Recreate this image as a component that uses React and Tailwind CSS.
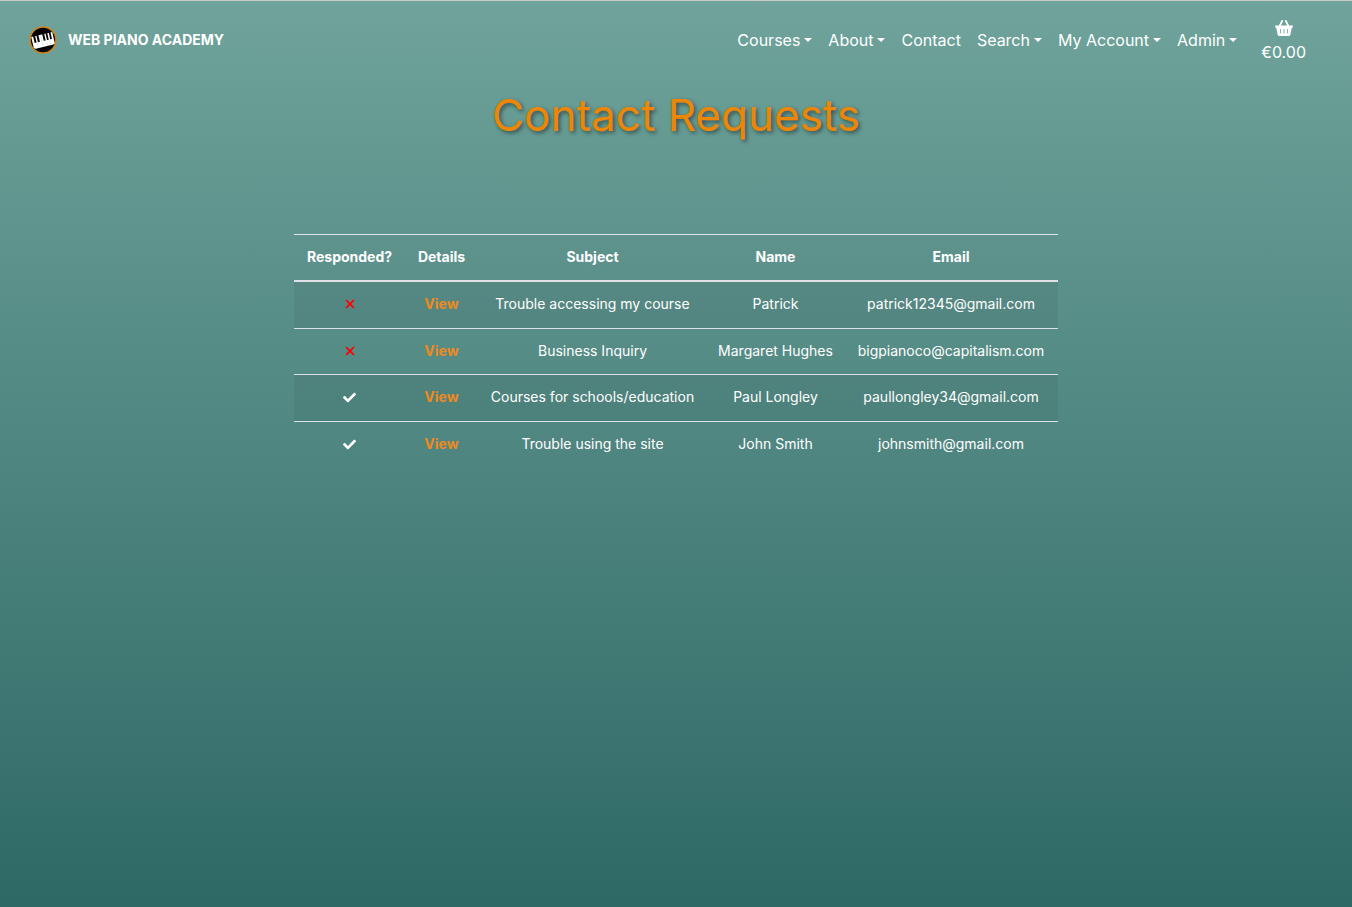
import { FaCheck } from "react-icons/fa";
import { FaXmark } from "react-icons/fa6";

const navItems = [
  { label: "Courses", menu: true },
  { label: "About", menu: true },
  { label: "Contact", menu: false },
  { label: "Search", menu: true },
  { label: "My Account", menu: true },
  { label: "Admin", menu: true },
];

const requests = [
  { responded: false, subject: "Trouble accessing my course", name: "Patrick", email: "patrick12345@gmail.com" },
  { responded: false, subject: "Business Inquiry", name: "Margaret Hughes", email: "bigpianoco@capitalism.com" },
  { responded: true, subject: "Courses for schools/education", name: "Paul Longley", email: "paullongley34@gmail.com" },
  { responded: true, subject: "Trouble using the site", name: "John Smith", email: "johnsmith@gmail.com" },
];

function Logo() {
  return (
    <svg viewBox="0 0 28 28" className="size-7" aria-hidden="true">
      <circle cx="14" cy="14" r="13" fill="#050505" stroke="#d0851a" strokeWidth="1.6" />
      <g transform="rotate(-13 14 14)">
        <path d="M3.200 8.300H24.800V19Q24.800 20.800 23 20.800H5Q3.400 20.800 3.200 19Z" fill="#fff" />
        <path d="M5.200 7.500h2v7.500h-2zM8.600 7.500h2v7.500h-2zM14.500 7.500h2v7.500h-2zM17.900 7.500h1.800v7.500h-1.800zM21.200 7.500h1.800v7.500h-1.800z" fill="#050505" />
        <path d="M7.800 15v6M12.500 9v12M17.200 15v6M20.500 15v6" stroke="#bbb" strokeWidth=".3" />
      </g>
    </svg>
  );
}

function Basket() {
  return (
    <svg viewBox="0 0 18 16" className="my-1 h-4 w-[18px]" aria-hidden="true">
      <path d="M7.200 .9 4.400 6.500M10.800 .9l2.800 5.600" stroke="currentColor" strokeWidth="1.800" strokeLinecap="round" />
      <path
        fillRule="evenodd"
        fill="currentColor"
        d="M.9 5.600h16.200q.9 0 .9 1t-.9 1h-.2l-1.500 6.900q-.3 1.500-1.700 1.500H4.300q-1.400 0-1.700-1.500L1.100 7.600H.9q-.9 0-.9-1t.9-1ZM5.100 9.300v3.800q0 .4.400.4t.4-.4V9.300q0-.4-.4-.4t-.4.4Zm3.500 0v3.800q0 .4.400.4t.4-.4V9.300q0-.4-.4-.4t-.4.4Zm3.500 0v3.800q0 .4.400.4t.4-.4V9.300q0-.4-.4-.4t-.4.4Z"
      />
    </svg>
  );
}

function Caret() {
  return <span className="ml-1 border-x-4 border-t-4 border-x-transparent border-t-current" />;
}

export default function App() {
  return (
    <div className="min-h-screen border-t border-[#cbcbcb] bg-linear-to-b from-[#6fa39b] to-[#2e6966] font-['Inter',sans-serif] text-white">
      <header className="flex h-[78px] items-center justify-between pr-[46px] pl-[29px]">
        <a href="#" className="flex items-center gap-[11px] text-sm font-bold">
          <Logo />
          WEB PIANO ACADEMY
        </a>
        <nav className="flex items-center gap-6">
          <ul className="flex items-center gap-4 text-base">
            {navItems.map((item) => (
              <li key={item.label}>
                {item.menu ? (
                  <button type="button" className="flex items-center">
                    {item.label}
                    <Caret />
                  </button>
                ) : (
                  <a href="#">{item.label}</a>
                )}
              </li>
            ))}
          </ul>
          <a href="#" aria-label="Basket" className="flex flex-col items-center text-base">
            <Basket />
            <span>€0.00</span>
          </a>
        </nav>
      </header>
      <main className="px-4">
        <h1 className="pt-2 text-center text-[44px] leading-[56px] text-[#ee8605] [text-shadow:2px_2px_4px_rgba(0,0,0,0.5)]">
          Contact Requests
        </h1>
        <table className="mx-auto mt-[91px] w-[764px] max-w-full table-fixed border-separate border-spacing-0 text-center text-sm">
          <colgroup>
            <col className="w-[111px]" />
            <col className="w-[73px]" />
            <col className="w-[229px]" />
            <col className="w-[137px]" />
            <col className="w-[214px]" />
          </colgroup>
          <thead>
            <tr className="h-12">
              {["Responded?", "Details", "Subject", "Name", "Email"].map((heading) => (
                <th key={heading} scope="col" className="border-t border-b-2 border-[#dee2e6] pb-0.5 font-bold">
                  {heading}
                </th>
              ))}
            </tr>
          </thead>
          <tbody className="[&>tr:not(:last-child)>td]:border-b [&>tr>td]:border-[#dee2e6] [&>tr>td]:pb-0.5">
            {requests.map((request) => (
              <tr key={request.email} className="odd:h-[47px] odd:bg-black/5 even:h-[46px]">
                <td>
                  {request.responded ? (
                    <FaCheck className="mx-auto size-[13px]" role="img" aria-label="Yes" />
                  ) : (
                    <FaXmark className="mx-auto size-[14px] text-[#ff0000]" role="img" aria-label="No" />
                  )}
                </td>
                <td>
                  <a href="#" className="font-bold text-[#ee8a1d]">View</a>
                </td>
                <td>{request.subject}</td>
                <td>{request.name}</td>
                <td>{request.email}</td>
              </tr>
            ))}
          </tbody>
        </table>
      </main>
    </div>
  );
}
